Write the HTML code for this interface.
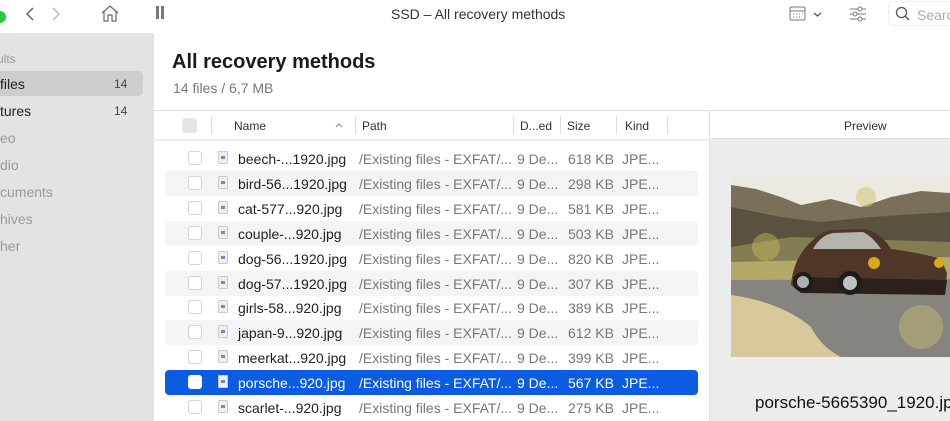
<!DOCTYPE html>
<html><head><meta charset="utf-8"><style>
*{margin:0;padding:0;box-sizing:border-box}
body{width:950px;height:421px;overflow:hidden;background:#fff;font-family:"Liberation Sans",sans-serif;position:relative;color:#222}
.a{position:absolute;white-space:nowrap}
#side{left:0;top:33px;width:154px;height:388px;background:#e3e3e3}
.si{font-size:14px;color:#999}
.row{position:absolute;left:165px;width:533px;height:25px;border-radius:4px}
.row .t{position:absolute;top:5px;font-size:14px;white-space:nowrap}
.cb{position:absolute;left:23px;top:5px;width:14px;height:14px;border:1px solid #d4d4d4;border-radius:3px;background:#fff}
.fi{position:absolute;left:53px;top:5px;width:10px;height:13px;background:#eee;border:1px solid #ccc;border-radius:1px}
.fi:after{content:"";position:absolute;left:2px;top:4px;width:4px;height:3px;background:#6f8fc0}
.hd{font-size:12px;color:#333;top:119px}
.sep{top:116px;width:1px;height:18px;background:#ddd}
</style></head><body>
<div class="a" style="left:-6px;top:11px;width:12px;height:12px;border-radius:6px;background:#28c840"></div>
<svg class="a" style="left:24px;top:6px" width="12" height="16"><path d="M9 2L3 8l6 6" stroke="#666" stroke-width="1.5" fill="none"/></svg>
<svg class="a" style="left:50px;top:6px" width="12" height="16"><path d="M3 2l6 6-6 6" stroke="#bbb" stroke-width="1.5" fill="none"/></svg>
<svg class="a" style="left:100px;top:4px" width="20" height="18"><path d="M2 9L10 2l8 7M4 7v10h4v-6h4v6h4V7" stroke="#666" stroke-width="1.2" fill="none"/></svg>
<div class="a" style="left:156px;top:6px;width:3px;height:13px;background:#777"></div>
<div class="a" style="left:161px;top:6px;width:3px;height:13px;background:#777"></div>
<div class="a" style="left:391px;top:6px;font-size:14px;color:#333">SSD – All recovery methods</div>
<svg class="a" style="left:789px;top:5px" width="40" height="18"><rect x="1" y="2" width="15" height="13" rx="1.5" stroke="#777" fill="none"/><line x1="1" y1="6" x2="16" y2="6" stroke="#777"/><path d="M4 9h1M7 9h1M10 9h1M13 9h1M4 12h1M7 12h1M10 12h1" stroke="#777"/><path d="M25 8l3.5 3 3.5-3" stroke="#555" stroke-width="1.3" fill="none"/></svg>
<svg class="a" style="left:848px;top:4px" width="20" height="20"><path d="M2 5h16M2 10h16M2 15h16" stroke="#777"/><circle cx="12" cy="5" r="2" fill="#fff" stroke="#777"/><circle cx="7" cy="10" r="2" fill="#fff" stroke="#777"/><circle cx="12" cy="15" r="2" fill="#fff" stroke="#777"/></svg>
<div class="a" style="left:888px;top:1px;width:80px;height:25px;border:1px solid #eee;border-radius:6px"></div>
<svg class="a" style="left:895px;top:6px" width="16" height="16"><circle cx="6.5" cy="6.5" r="5" stroke="#555" stroke-width="1.3" fill="none"/><path d="M10 10l4 4" stroke="#555" stroke-width="1.5"/></svg>
<div class="a" style="left:917px;top:7px;font-size:14px;color:#aaa">Search</div>

<div class="a" id="side"></div>
<div class="a si" style="left:-3px;top:52px;font-size:12px;color:#999">ults</div>
<div class="a" style="left:-10px;top:71px;width:153px;height:25px;background:#cdcdcd;border-radius:5px"></div>
<div class="a" style="left:0;top:76px;font-size:14px;color:#222">files</div>
<div class="a" style="left:114px;top:77px;font-size:12px;color:#444">14</div>
<div class="a" style="left:0;top:103px;font-size:14px;color:#222">tures</div>
<div class="a" style="left:114px;top:104px;font-size:12px;color:#444">14</div>
<div class="a si" style="left:0;top:130px">eo</div>
<div class="a si" style="left:0;top:157px">dio</div>
<div class="a si" style="left:0;top:184px">cuments</div>
<div class="a si" style="left:0;top:211px">hives</div>
<div class="a si" style="left:0;top:238px">her</div>

<div class="a" style="left:172px;top:51px;font-size:20px;font-weight:bold;color:#1a1a1a">All recovery methods</div>
<div class="a" style="left:173px;top:80px;font-size:14px;color:#777">14 files / 6,7 MB</div>

<div class="a" style="left:154px;top:110px;width:796px;height:1px;background:#e2e2e2"></div>
<div class="a" style="left:154px;top:139px;width:555px;height:2px;background:#ececec"></div>
<div class="a" style="left:182px;top:118px;width:15px;height:15px;background:#e6e6e6;border-radius:3px"></div>
<div class="a sep" style="left:211px"></div>
<div class="a hd" style="left:234px">Name</div>
<svg class="a" style="left:334px;top:121px" width="10" height="8"><path d="M2 6l3-3 3 3" stroke="#888" fill="none"/></svg>
<div class="a sep" style="left:355px"></div>
<div class="a hd" style="left:362px">Path</div>
<div class="a sep" style="left:513px"></div>
<div class="a hd" style="left:520px">D...ed</div>
<div class="a sep" style="left:560px"></div>
<div class="a hd" style="left:567px">Size</div>
<div class="a sep" style="left:616px"></div>
<div class="a hd" style="left:625px">Kind</div>
<div class="a sep" style="left:667px"></div>
<div class="a" style="left:709px;top:111px;width:241px;height:310px;background:#ececec;border-left:1px solid #e0e0e0"></div>
<div class="a" style="left:710px;top:111px;width:240px;height:28px;background:#fff;border-bottom:1px solid #e2e2e2"></div>
<div class="a" style="left:844px;top:119px;font-size:12px;color:#333">Preview</div>

<div id="rows"></div>

<svg class="a" style="left:731px;top:177px" width="219" height="180">
<rect width="219" height="180" fill="#ece9e0"/>
<path d="M0 8L25 12L50 20L70 28L100 22L130 30L160 20L190 14L219 16V110H0Z" fill="#7a705a"/>
<path d="M0 30L50 40L90 45L140 40L219 35V105H0Z" fill="#5a5240"/>
<path d="M0 70L60 60L219 65V105H0Z" fill="#8e8758" opacity=".8"/>
<path d="M0 85L219 80V106H0Z" fill="#b3aa68"/>
<path d="M0 103L219 102V180H0Z" fill="#86847e"/>
<path d="M0 118Q50 125 80 150Q90 170 110 180H0Z" fill="#d8c99c"/>
<path d="M60 108Q62 85 75 70Q88 55 100 53L135 52Q150 56 160 72Q190 76 210 82L216 96L214 116L70 116Z" fill="#4f3628"/>
<path d="M82 72Q90 58 102 56L132 55Q142 60 150 72Z" fill="#b5b3ad"/>
<path d="M62 100L216 103L214 118L70 116Z" fill="#2c211a"/>
<circle cx="72" cy="105" r="10" fill="#1d1d1d"/><circle cx="72" cy="105" r="6" fill="#b0b0b0"/>
<circle cx="119" cy="106" r="12" fill="#1d1d1d"/><circle cx="119" cy="106" r="7" fill="#c0c0c0"/>
<circle cx="143" cy="86" r="6" fill="#d8aa18"/><circle cx="208" cy="86" r="5" fill="#d8aa18"/>
<circle cx="190" cy="150" r="22" fill="#c8bc70" opacity=".45"/><circle cx="35" cy="70" r="14" fill="#c8bc60" opacity=".45"/><circle cx="135" cy="20" r="10" fill="#d0c470" opacity=".5"/>
</svg>
<div class="a" style="left:755px;top:393px;font-size:17px;color:#111">porsche-5665390_1920.jpg</div>
<script>
var d=[["beech-...1920.jpg","618 KB"],["bird-56...1920.jpg","298 KB"],["cat-577...920.jpg","581 KB"],["couple-...920.jpg","503 KB"],["dog-56...1920.jpg","820 KB"],["dog-57...1920.jpg","307 KB"],["girls-58...920.jpg","389 KB"],["japan-9...920.jpg","612 KB"],["meerkat...920.jpg","399 KB"],["porsche...920.jpg","567 KB"],["scarlet-...920.jpg","275 KB"]];
var h="";
d.forEach(function(r,i){var y=146+i*24.9;var sel=i==9;var bg=sel?"#0b5ce0":(i%2?"#f4f4f4":"transparent");
var c=sel?"#fff":"#222",g=sel?"#fff":"#777";
h+='<div class="row" style="top:'+y+'px;background:'+bg+'"><div class="cb"'+(sel?' style="border-color:#fff"':'')+'></div><div class="fi"></div>'+
'<div class="t" style="left:73px;color:'+c+'">'+r[0]+'</div><div class="t" style="left:194px;color:'+g+'">/Existing files - EXFAT/...</div><div class="t" style="left:352px;color:'+g+'">9 De...</div><div class="t" style="left:403px;color:'+g+'">'+r[1]+'</div><div class="t" style="left:457px;color:'+g+'">JPE...</div></div>';});
document.getElementById("rows").innerHTML=h;
</script>
</body></html>
